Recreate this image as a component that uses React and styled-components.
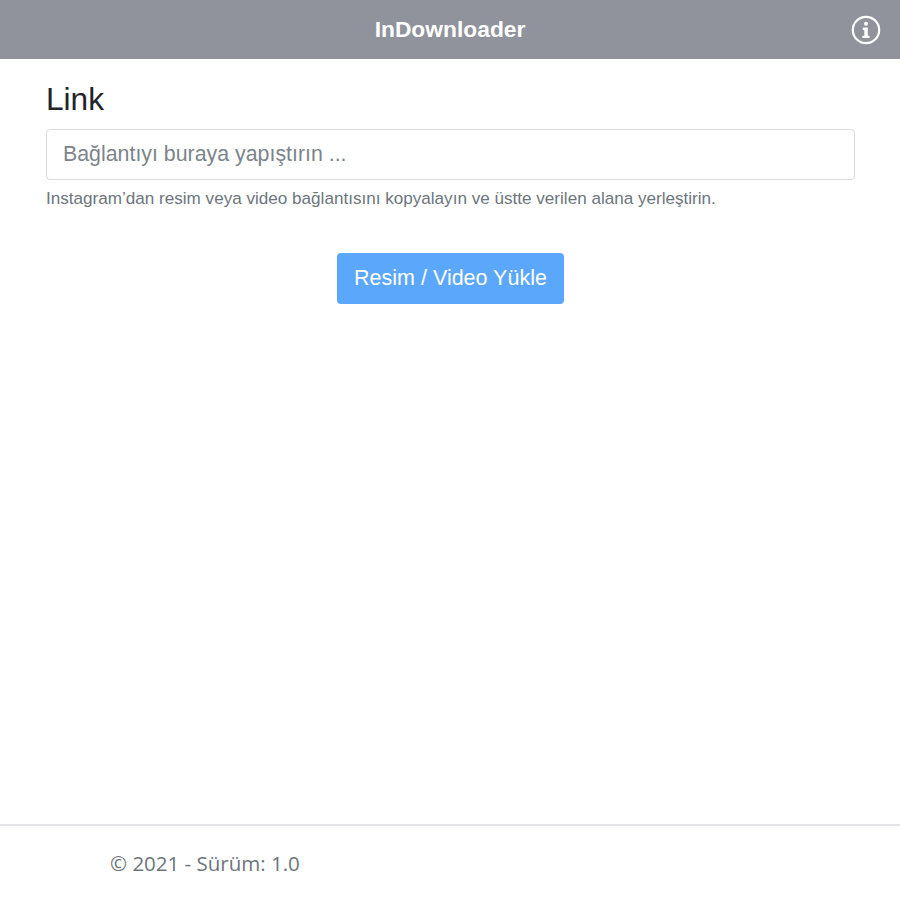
import React from "react";
import styled, { createGlobalStyle } from "styled-components";

const GlobalStyle = createGlobalStyle`
    html, body {
        margin: 0;
        padding: 0;
        background: #fff;
    }
`;

const Page = styled.div`
    width: 900px;
    height: 900px;
    display: flex;
    flex-direction: column;
    font-family: "Liberation Sans", Arial, sans-serif;
    overflow: hidden;
`;

const Header = styled.header`
    height: 59px;
    box-sizing: border-box;
    flex-shrink: 0;
    background: #90939c;
    display: grid;
    grid-template-columns: 1fr auto 1fr;
    align-items: center;
`;

const Title = styled.h1`
    grid-column: 2;
    margin: 0;
    color: #fff;
    font-size: 22.8px;
    font-weight: 700;
`;

const InfoButton = styled.div`
    grid-column: 3;
    justify-self: end;
    display: flex;
    margin: 1px 19px 0 0;
`;

const Main = styled.main`
    flex: 1;
    padding: 22px 45px 0 46px;
    display: flex;
    flex-direction: column;
`;

const Label = styled.label`
    font-size: 31.6px;
    line-height: 36px;
    color: #212529;
`;

const Input = styled.input`
    margin-top: 12px;
    height: 51px;
    box-sizing: border-box;
    border: 1px solid #d9dbdd;
    border-radius: 4px;
    padding: 0 16px;
    font-family: inherit;
    font-size: 21.35px;
    color: #495057;
    outline: none;

    &::placeholder {
        color: #7c848b;
        opacity: 1;
    }
`;

const Hint = styled.small`
    margin-top: 9px;
    font-size: 17.1px;
    line-height: 20px;
    color: #6c757d;
`;

const Actions = styled.div`
    margin-top: 44px;
    display: flex;
    justify-content: center;
`;

const Button = styled.button`
    width: 227px;
    height: 51px;
    border: none;
    border-radius: 4px;
    background: #5aa7fb;
    color: #fff;
    font-family: inherit;
    font-size: 21.5px;
    padding: 0;
`;

const Footer = styled.footer`
    height: 76px;
    flex-shrink: 0;
    box-sizing: border-box;
    border-top: 2px solid #e4e5e7;
    padding: 24px 0 0 110px;
    font-family: "Open Sans", sans-serif;
    font-size: 20.5px;
    line-height: 26px;
    color: #6c757d;
`;

const InfoIcon = () => (
    <svg width="30" height="30" viewBox="0 0 30 30" fill="none">
        <circle cx="15" cy="15" r="13.2" stroke="#fff" strokeWidth="2.2" />
        <circle cx="15" cy="8.8" r="2" fill="#fff" />
        <path
            d="M11.8 12.6h5v8.2h1.8v2.3h-7.2v-2.3h1.9v-5.9h-1.5z"
            fill="#fff"
        />
    </svg>
);

const App = () => (
    <Page>
        <GlobalStyle />
        <Header>
            <Title>InDownloader</Title>
            <InfoButton>
                <InfoIcon />
            </InfoButton>
        </Header>
        <Main>
            <Label htmlFor="link">Link</Label>
            <Input id="link" placeholder="Bağlantıyı buraya yapıştırın ..." />
            <Hint>
                Instagram’dan resim veya video bağlantısını kopyalayın ve üstte
                verilen alana yerleştirin.
            </Hint>
            <Actions>
                <Button>Resim / Video Yükle</Button>
            </Actions>
        </Main>
        <Footer>© 2021 - Sürüm: 1.0</Footer>
    </Page>
);

export default App;
